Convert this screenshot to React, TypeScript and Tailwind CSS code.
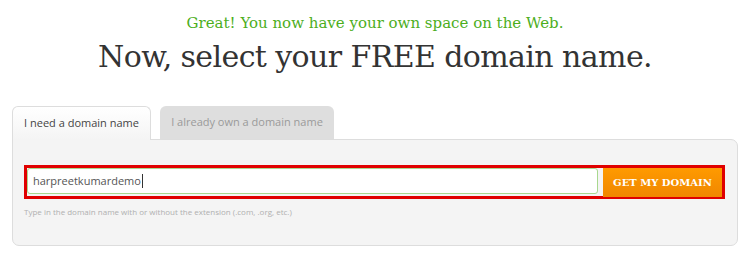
import React from "react";

const slab = "font-['DejaVu_Serif',serif]";
const sans = "font-['Open_Sans',sans-serif]";

const DomainPicker = () => {
  return (
    <div className="mx-[12px] mt-[29px]">
      <div className="flex items-end gap-[9px]">
        <div
          className={`relative z-10 -mb-px flex h-[34px] w-[139px] items-center justify-center whitespace-nowrap rounded-t-[6px] border border-b-0 border-[#ddd] bg-gradient-to-b from-white to-[#f4f4f4] text-[11px] text-[#444] ${sans}`}
        >
          I need a domain name
        </div>
        <div
          className={`flex h-[33px] w-[174px] items-center justify-center whitespace-nowrap rounded-t-[6px] bg-[#dedede] text-[11px] text-[#9a9a9a] ${sans}`}
        >
          I already own a domain name
        </div>
      </div>
      <div className="h-[107px] rounded-b-[7px] rounded-tr-[7px] border border-[#ddd] bg-[#f4f4f4] px-[11px] pt-[25px]">
        <div className="flex h-[34px] w-[701px] items-start gap-[5px] border-[3px] border-[#e00000]">
          <div className="flex h-[26px] flex-1 items-center rounded-[3px] border border-[#a8d88e] bg-white pl-[5px]">
            <span className={`text-[11px] text-[#555] ${sans}`}>harpreetkumardemo</span>
            <span className="ml-px h-[14px] w-px bg-[#333]" />
          </div>
          <button
            type="button"
            className={`flex h-[29px] w-[119px] items-center justify-center whitespace-nowrap bg-gradient-to-b from-[#ff9a00] to-[#f08700] text-[10px] font-bold text-white ${slab}`}
          >
            GET MY DOMAIN
          </button>
        </div>
        <p className={`mt-[7px] text-[8px] text-[#b0b0b0] ${sans}`}>
          Type in the domain name with or without the extension (.com, .org, etc.)
        </p>
      </div>
    </div>
  );
};

export default function App() {
  return (
    <div className="h-[257px] w-[750px] overflow-hidden bg-white pt-[13px]">
      <p className={`text-center text-[15px] leading-[20px] text-[#4cae1c] ${slab}`}>
        Great! You now have your own space on the Web.
      </p>
      <h1 className={`mt-[4px] text-center text-[30px] leading-[40px] tracking-[-0.6px] text-[#333] ${slab}`}>
        Now, select your FREE domain name.
      </h1>
      <DomainPicker />
    </div>
  );
}
